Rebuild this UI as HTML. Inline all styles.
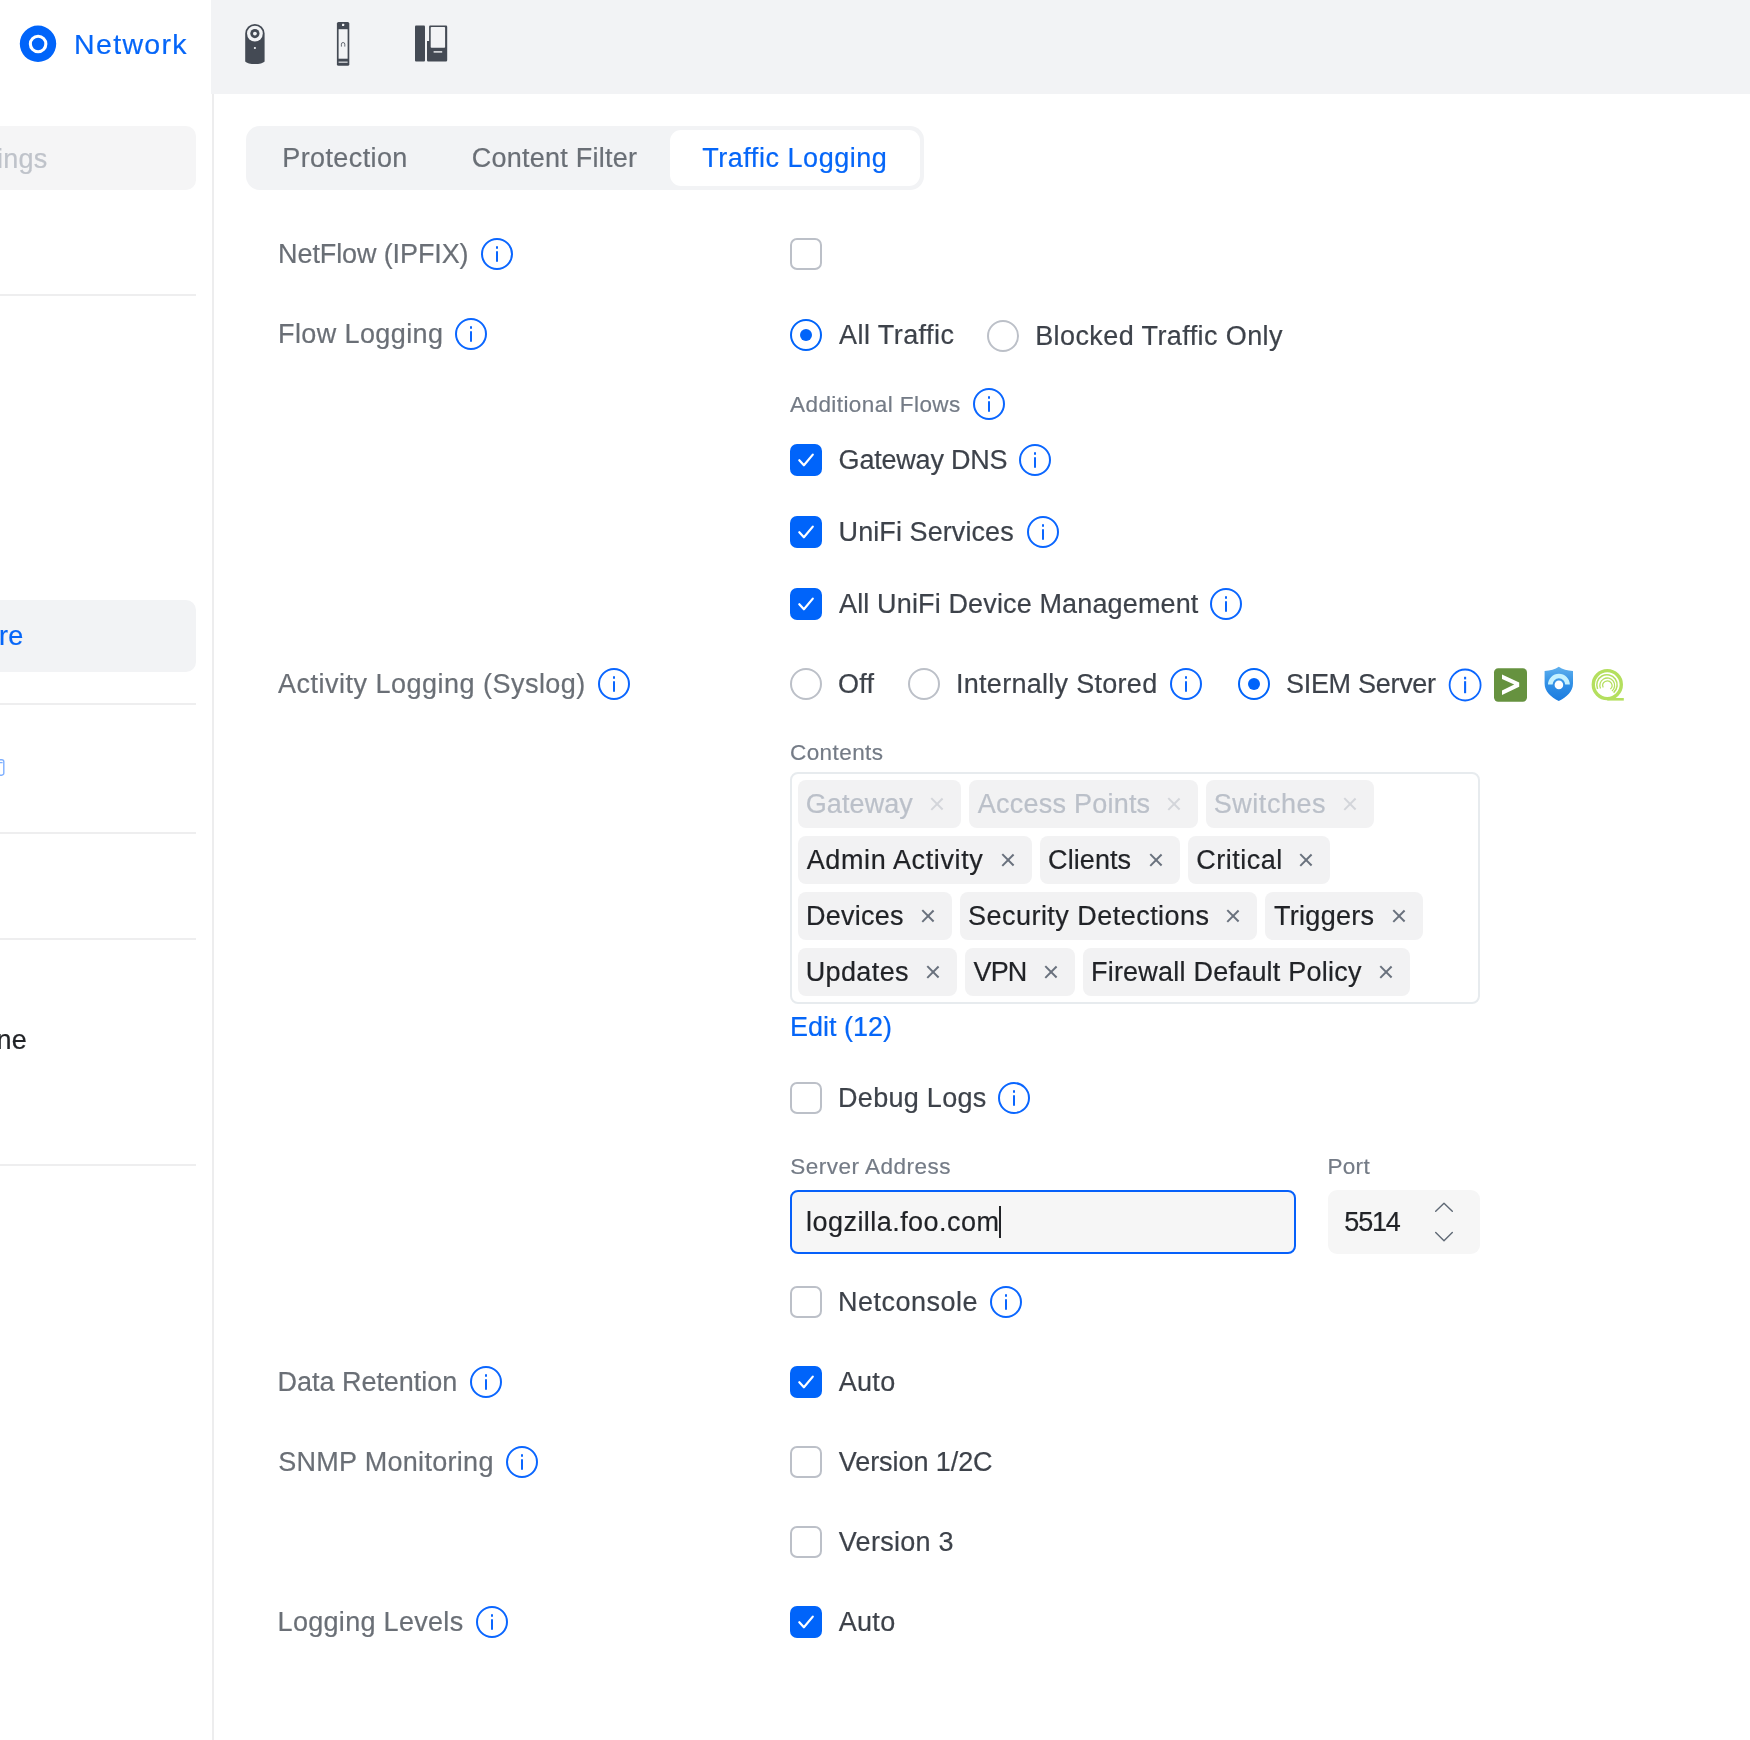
<!DOCTYPE html>
<html lang="en">
<head>
<meta charset="utf-8">
<title>Network - Traffic Logging</title>
<style>
html,body{margin:0;padding:0;}
body{width:1750px;height:1740px;overflow:hidden;background:#fff;position:relative;
 font-family:"Liberation Sans",sans-serif;color:#3d424a;-webkit-font-smoothing:antialiased;}
*{box-sizing:border-box;}
.abs{position:absolute;}
/* top bar */
#topbar{left:211px;top:0;width:1539px;height:94px;background:#f2f3f5;}
#vline{left:212px;top:94px;width:2px;height:1646px;background:#ededee;}
/* sidebar */
.sdiv{left:0;width:196px;height:2px;background:#eeeeef;}
#search{left:-20px;top:126px;width:216px;height:64px;border-radius:10px;background:#f5f5f6;}
#selrow{left:-20px;top:600px;width:216px;height:71.500px;border-radius:10px;background:#f2f3f5;}
/* text */
.t{position:absolute;white-space:nowrap;font-size:27px;line-height:32px;height:32px;letter-spacing:0.2px;-webkit-text-stroke:0.2px currentColor;}
.lbl{color:#6a6f76;}
.val{color:#3d424a;}
.sm{font-size:22.5px;color:#747b86;}
.blue{color:#0566f8;}
/* controls */
.cb{position:absolute;width:32px;height:32px;border-radius:7px;border:2px solid #bcc0c8;background:#fff;}
.cb.on{border:none;background:#0064fa;}
.cb.on svg{position:absolute;left:0;top:0;}
.rd{position:absolute;width:32px;height:32px;border-radius:50%;border:2px solid #bcc0c8;background:#fff;}
.rd.on{border-color:#0064fa;}
.rd.on::after{content:"";position:absolute;left:8px;top:8px;width:12px;height:12px;border-radius:50%;background:#0064fa;}
.info{position:absolute;width:32px;height:32px;border-radius:50%;border:2px solid #0a66ff;}
.info::before{content:"";position:absolute;left:13px;top:6px;width:2.4px;height:3px;background:#0a66ff;border-radius:1px;}
.info::after{content:"";position:absolute;left:13px;top:11px;width:2.4px;height:11px;background:#0a66ff;border-radius:1px;}
/* tabs */
#tabs{left:246px;top:126px;width:678px;height:64px;border-radius:14px;background:#f2f3f5;}
#tabact{left:670px;top:130px;width:250px;height:56px;border-radius:11px;background:#fff;}
/* chips */
#cbox{left:790px;top:772px;width:690px;height:232px;border:2px solid #e7ebee;border-radius:8px;background:#fff;}
.chip{position:absolute;height:48px;border-radius:8px;background:#f2f2f3;}
.chip span{position:absolute;left:8px;top:8px;font-size:27px;line-height:32px;white-space:nowrap;color:#212327;letter-spacing:0.2px;-webkit-text-stroke:0.2px currentColor;}
.chip.dis span{color:#bbc0c9;}
.chip i{position:absolute;right:16.300px;top:16.200px;width:16px;height:16px;}
.chip i::before,.chip i::after{content:"";position:absolute;left:7.250px;top:0.100px;width:1.500px;height:16px;background:#69717d;transform:rotate(45deg);}
.chip i::after{transform:rotate(-45deg);}
.chip.dis i::before,.chip.dis i::after{background:#d3d5da;}
/* inputs */
#addr{left:790px;top:1190px;width:506px;height:64px;border:2px solid #0660fa;border-radius:8px;background:#f6f6f6;}
#port{left:1328px;top:1190px;width:152px;height:64px;border-radius:9px;background:#f6f6f6;}
</style>
</head>
<body>
<div id="wrap" style="position:absolute;left:0;top:0;width:1750px;height:1740px;overflow:hidden;will-change:transform;">
<!-- sidebar -->
<div class="abs" id="search"></div>
<div class="abs" id="selrow"></div>
<div class="abs sdiv" style="top:294px"></div>
<div class="abs sdiv" style="top:703px"></div>
<div class="abs sdiv" style="top:832px"></div>
<div class="abs sdiv" style="top:938px"></div>
<div class="abs sdiv" style="top:1164px"></div>
<div class="abs" id="topbar"></div>
<div class="abs" id="vline"></div>

<!-- logo -->
<svg class="abs" style="left:18px;top:24px" width="40" height="40" viewBox="0 0 40 40">
 <circle cx="20" cy="19.800" r="18.200" fill="#0064fa"/>
 <circle cx="20.100" cy="20" r="7.750" fill="none" stroke="#fff" stroke-width="3.100"/>
</svg>
<div class="t blue" id="tNetwork" style="letter-spacing:1.35px;left:74px;top:28px;font-size:28.5px">Network</div>
<!-- device icons -->
<svg class="abs" style="left:240px;top:18px" width="220" height="52" viewBox="240 18 220 52">
 <g fill="#444a54">
  <!-- camera -->
  <path d="M245.2 33.6a9.7 9.7 0 0 1 19.4 0V61.5c-2.5 3.4-16.9 3.4-19.4 0Z"/>
  <!-- doorbell -->
  <rect x="336.9" y="22" width="12.4" height="43.8" rx="1.6"/>
  <!-- intercom -->
  <rect x="415" y="25.5" width="10" height="36" rx="1"/>
  <path d="M427 41h2.100V26.500a1 1 0 0 1 1-1H446a1.2 1.2 0 0 1 1.200 1.200V60.300a1.200 1.200 0 0 1-1.200 1.200H428.200a1.200 1.200 0 0 1-1.200-1.200Z"/>
 </g>
 <g fill="#f2f3f5">
  <circle cx="254.9" cy="33.6" r="7.9"/>
  <circle cx="254.9" cy="48" r="1.1"/>
  <rect x="338.6" y="29.200" width="9" height="29.500"/>
  <rect x="342" y="23.700" width="2.200" height="2.200" rx="0.500"/>
  <rect x="338.6" y="61.600" width="9" height="1.100"/>
  <rect x="430.700" y="27" width="14.400" height="20.800" rx="0.800"/>
  <rect x="433.600" y="51.200" width="8.600" height="1.400"/>
 </g>
 <circle cx="254.900" cy="33.600" r="4.600" fill="#444a54"/>
 <circle cx="254.900" cy="33.600" r="1.900" fill="#f2f3f5"/>
 <path d="M341.400 46.600v-2.400a1.700 1.700 0 0 1 3.400 0v2.400" fill="none" stroke="#444a54" stroke-width="0.800"/>
</svg>
<!-- sidebar text -->
<div class="t" id="tIngs" style="left:-3px;top:143px;color:#bfc3ca;">ings</div>
<div class="t blue" id="tRe" style="left:-1px;top:620px;">re</div>
<div class="t" id="tNe" style="left:-3.400px;top:1024px;color:#212327;">ne</div>
<svg class="abs" style="left:0;top:758px" width="6" height="20" viewBox="0 0 6 20"><path d="M0 1.800h1.800a2 2 0 0 1 2 2v11.400a2 2 0 0 1-2 2H0M0 4.600h2.600" fill="none" stroke="#7fb0ff" stroke-width="1.400"/></svg>
<!-- tabs -->
<div class="abs" id="tabs"></div>
<div class="abs" id="tabact"></div>
<div class="t lbl" id="tProtection" style="letter-spacing:0.389px;left:282.3px;top:142px;">Protection</div>
<div class="t lbl" id="tContent" style="letter-spacing:0.248px;left:471.8px;top:142px;">Content Filter</div>
<div class="t blue" id="tTraffic" style="letter-spacing:0.541px;left:702.2px;top:142px;">Traffic Logging</div>

<!-- form labels -->
<div class="t lbl" id="x1" style="letter-spacing:-0.11px;left:278.1px;top:238px;">NetFlow (IPFIX)</div>
<div class="info" style="left:481px;top:238px"></div>
<div class="t lbl" id="x2" style="letter-spacing:0.388px;left:278.1px;top:318px;">Flow Logging</div>
<div class="info" style="left:455px;top:318px"></div>
<div class="t lbl" id="x3" style="letter-spacing:0.485px;left:278.1px;top:668px;">Activity Logging (Syslog)</div>
<div class="info" style="left:598px;top:668px"></div>
<div class="t lbl" id="x4" style="letter-spacing:-0.038px;left:277.6px;top:1366px;">Data Retention</div>
<div class="info" style="left:470px;top:1366px"></div>
<div class="t lbl" id="x5" style="letter-spacing:0.296px;left:278.2px;top:1446px;">SNMP Monitoring</div>
<div class="info" style="left:506px;top:1446px"></div>
<div class="t lbl" id="x6" style="letter-spacing:0.302px;left:277.6px;top:1606px;">Logging Levels</div>
<div class="info" style="left:476px;top:1606px"></div>
<!-- form values -->
<div class="cb" style="left:790px;top:238px"></div>
<div class="rd on" style="left:790px;top:319px"></div>
<div class="t val" id="x7" style="letter-spacing:0.44px;left:839px;top:319px;">All Traffic</div>
<div class="rd" style="left:987px;top:320px"></div>
<div class="t val" id="x8" style="letter-spacing:0.407px;left:1035.2px;top:320px;">Blocked Traffic Only</div>
<div class="t sm" id="x9" style="letter-spacing:0.43px;left:790px;top:389px;">Additional Flows</div>
<div class="info" style="left:973px;top:388px"></div>
<div class="cb on" style="left:790px;top:444px"><svg width="32" height="32" viewBox="0 0 32 32"><path d="M9.300 16.200L13.900 21.300L22.800 10.600" fill="none" stroke="#fff" stroke-width="2.200" stroke-linecap="round" stroke-linejoin="round"/></svg></div>
<div class="t val" id="x10" style="letter-spacing:-0.21px;left:838.6px;top:444px;">Gateway DNS</div>
<div class="info" style="left:1019px;top:444px"></div>
<div class="cb on" style="left:790px;top:516px"><svg width="32" height="32" viewBox="0 0 32 32"><path d="M9.300 16.200L13.900 21.300L22.800 10.600" fill="none" stroke="#fff" stroke-width="2.200" stroke-linecap="round" stroke-linejoin="round"/></svg></div>
<div class="t val" id="x11" style="letter-spacing:0.084px;left:838.6px;top:516px;">UniFi Services</div>
<div class="info" style="left:1027px;top:516px"></div>
<div class="cb on" style="left:790px;top:588px"><svg width="32" height="32" viewBox="0 0 32 32"><path d="M9.300 16.200L13.900 21.300L22.800 10.600" fill="none" stroke="#fff" stroke-width="2.200" stroke-linecap="round" stroke-linejoin="round"/></svg></div>
<div class="t val" id="x12" style="letter-spacing:0.143px;left:839px;top:588px;">All UniFi Device Management</div>
<div class="info" style="left:1210px;top:588px"></div>
<div class="rd" style="left:790px;top:668px"></div>
<div class="t val" id="x13" style="letter-spacing:0.35px;left:837.9px;top:668px;">Off</div>
<div class="rd" style="left:908px;top:668px"></div>
<div class="t val" id="x14" style="letter-spacing:0.284px;left:956px;top:668px;">Internally Stored</div>
<div class="info" style="left:1170px;top:668px"></div>
<div class="rd on" style="left:1238px;top:668px"></div>
<div class="t val" id="x15" style="letter-spacing:-0.3px;left:1286px;top:668px;">SIEM Server</div>
<svg class="abs" style="left:1446px;top:666px" width="38" height="38" viewBox="0 0 38 38"><circle cx="19.100" cy="19" r="15.500" fill="none" stroke="#0a66ff" stroke-width="1.800"/><rect x="18.050" y="10.800" width="2.100" height="2.600" fill="#0a66ff"/><rect x="18.050" y="15.200" width="2.100" height="12" fill="#0a66ff"/></svg>
<div class="t sm" id="x16" style="letter-spacing:0.427px;left:790px;top:737px;">Contents</div>
<div class="t blue" id="x17" style="letter-spacing:-0.013px;left:790px;top:1011px;">Edit (12)</div>
<div class="cb" style="left:790px;top:1082px"></div>
<div class="t val" id="x18" style="letter-spacing:0.291px;left:838.05px;top:1082px;">Debug Logs</div>
<div class="info" style="left:998px;top:1082px"></div>
<div class="t sm" id="x19" style="letter-spacing:0.489px;left:790.25px;top:1151px;">Server Address</div>
<div class="t sm" id="x20" style="letter-spacing:0.33px;left:1327.4px;top:1151px;">Port</div>
<div class="cb" style="left:790px;top:1286px"></div>
<div class="t val" id="x21" style="letter-spacing:0.501px;left:838.05px;top:1286px;">Netconsole</div>
<div class="info" style="left:990px;top:1286px"></div>
<div class="cb on" style="left:790px;top:1366px"><svg width="32" height="32" viewBox="0 0 32 32"><path d="M9.300 16.200L13.900 21.300L22.800 10.600" fill="none" stroke="#fff" stroke-width="2.200" stroke-linecap="round" stroke-linejoin="round"/></svg></div>
<div class="t val" id="x22" style="letter-spacing:0.27px;left:838.8px;top:1366px;">Auto</div>
<div class="cb" style="left:790px;top:1446px"></div>
<div class="t val" id="x23" style="letter-spacing:-0.07px;left:838.8px;top:1446px;">Version 1/2C</div>
<div class="cb" style="left:790px;top:1526px"></div>
<div class="t val" id="x24" style="letter-spacing:0.28px;left:838.8px;top:1526px;">Version 3</div>
<div class="cb on" style="left:790px;top:1606px"><svg width="32" height="32" viewBox="0 0 32 32"><path d="M9.300 16.200L13.900 21.300L22.800 10.600" fill="none" stroke="#fff" stroke-width="2.200" stroke-linecap="round" stroke-linejoin="round"/></svg></div>
<div class="t val" id="x25" style="letter-spacing:0.27px;left:838.8px;top:1606px;">Auto</div>

<!-- SIEM icons -->
<svg class="abs" style="left:1490px;top:664px" width="140" height="42" viewBox="1490 664 140 42">
 <defs><linearGradient id="shg" x1="0" y1="0" x2="0" y2="1"><stop offset="0" stop-color="#5fb0ee"/><stop offset="0.45" stop-color="#3492e6"/><stop offset="1" stop-color="#1a7be0"/></linearGradient></defs>
 <rect x="1494" y="668.300" width="33" height="33.400" rx="4.200" fill="#66923f"/>
 <path d="M1502 674.500l17.200 8v4.200l-17.200 8.200v-4.400l12.200-5.900-12.200-5.600Z" fill="#fff"/>
 <path d="M1558.800 666.700c3.600 2.600 8.600 3.900 14.200 4.200v12.600c0 8-6.200 13.400-14.200 17.500-8-4.100-14.200-9.500-14.200-17.500v-12.600c5.600-.3 10.600-1.600 14.200-4.200Z" fill="url(#shg)"/>
 <path d="M1548 684.600a10.900 10.900 0 0 1 21.800 0h-4.600a6.300 6.300 0 0 0-12.600 0Z" fill="#c5f2ff"/>
 <circle cx="1558.900" cy="684.900" r="4.300" fill="#fff"/>
 <g fill="none" stroke="#b4df5e">
  <circle cx="1607.300" cy="684.600" r="14" stroke-width="3.400"/>
  <path d="M1597.600 689a10.200 10.200 0 1 1 16 3.600" stroke-width="1.500"/>
  <path d="M1600.500 688.500a7.400 7.400 0 1 1 11.500 2.600" stroke-width="1.300"/>
  <path d="M1603.200 687.500a4.600 4.600 0 1 1 7.100 1.600" stroke-width="1.200"/>
  <path d="M1607.300 699.300h16.500" stroke-width="2.600"/>
 </g>
</svg>
<!-- chips -->
<div class="abs" id="cbox"></div>
<div class="chip dis" style="left:798px;top:780px;width:163px"><span id="c1" style="letter-spacing:0.1px;margin-left:-0.3px;">Gateway</span><i></i></div>
<div class="chip dis" style="left:969px;top:780px;width:229px"><span id="c2" style="letter-spacing:0.23px;margin-left:0.8px;">Access Points</span><i></i></div>
<div class="chip dis" style="left:1206px;top:780px;width:168px"><span id="c3" style="letter-spacing:0.546px;margin-left:-0.3px;">Switches</span><i></i></div>
<div class="chip" style="left:798px;top:836px;width:234px"><span id="c4" style="letter-spacing:0.62px;margin-left:0.7px;">Admin Activity</span><i></i></div>
<div class="chip" style="left:1040px;top:836px;width:140px"><span id="c5" style="letter-spacing:0.07px;margin-left:0.1px;">Clients</span><i></i></div>
<div class="chip" style="left:1188px;top:836px;width:142px"><span id="c6" style="letter-spacing:0.501px;margin-left:0.2px;">Critical</span><i></i></div>
<div class="chip" style="left:798px;top:892px;width:154px"><span id="c7" style="letter-spacing:0.247px;margin-left:-0.05px;">Devices</span><i></i></div>
<div class="chip" style="left:960px;top:892px;width:297px"><span id="c8" style="letter-spacing:0.47px;">Security Detections</span><i></i></div>
<div class="chip" style="left:1265px;top:892px;width:158px"><span id="c9" style="letter-spacing:0.29px;margin-left:1px;">Triggers</span><i></i></div>
<div class="chip" style="left:798px;top:948px;width:159px"><span id="c10" style="letter-spacing:0.38px;margin-left:-0.3px;">Updates</span><i></i></div>
<div class="chip" style="left:965px;top:948px;width:110px"><span id="c11" style="letter-spacing:-0.95px;margin-left:0.6px;">VPN</span><i></i></div>
<div class="chip" style="left:1083px;top:948px;width:327px"><span id="c12" style="letter-spacing:0.222px;margin-left:-0.05px;">Firewall Default Policy</span><i></i></div>
<!-- inputs -->
<div class="abs" id="addr"></div>
<div class="t val" id="x26" style="letter-spacing:0.447px;left:806.1px;top:1206px;color:#212327;">logzilla.foo.com</div>
<div class="abs" id="cursor" style="left:999px;top:1206px;width:2px;height:32px;background:#212327"></div>
<div class="abs" id="port"></div>
<div class="t val" id="x27" style="letter-spacing:-1.17px;left:1344.3px;top:1206px;color:#212327;">5514</div>
<svg class="abs" style="left:1432px;top:1198px" width="24" height="48" viewBox="0 0 24 48"><path d="M3.700 13.300L12 5.200l8.300 8.100M3.700 34.600L12 42.700l8.300-8.100" fill="none" stroke="#5f6975" stroke-width="1.400" stroke-linecap="round" stroke-linejoin="round"/></svg>
</div>
</body>
</html>
